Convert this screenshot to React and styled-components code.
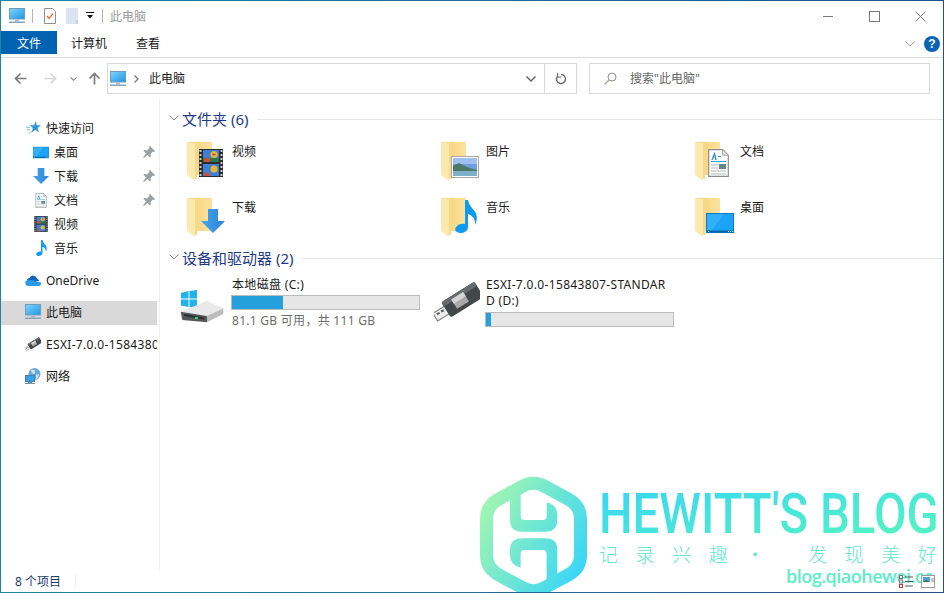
import React from 'react';
import styled, { createGlobalStyle } from 'styled-components';

const GlobalStyle = createGlobalStyle`
  html, body { margin: 0; padding: 0; background: #fff; }
  body { font-family: "Noto Sans", "Noto Sans CJK SC", sans-serif; font-size: 12px; color: #1a1a1a; }
`;

const Window = styled.div`
  position: relative;
  box-sizing: border-box;
  width: 944px;
  height: 593px;
  display: flex;
  flex-direction: column;
  overflow: hidden;
  background: #fff;
  border: 1px solid;
  border-image: linear-gradient(90deg, #1b87a6, #24508f) 1;
`;

const TitleBar = styled.div`
  height: 30px;
  display: flex;
  align-items: center;
  padding-left: 8px;
`;
const QuickItem = styled.span`
  display: flex;
  margin-left: ${p => p.$gap || 0}px;
`;
const QuickSep = styled.span`
  width: 1px;
  height: 14px;
  background: #b5b5b5;
  margin-left: ${p => p.$gap}px;
`;
const TitleText = styled.span`
  margin: 0 0 1px 7px;
  color: #9a9a9a;
`;
const WindowControls = styled.div`
  margin-left: auto;
  display: flex;
`;
const ControlButton = styled.div`
  width: 46px;
  height: 30px;
  display: flex;
  align-items: center;
  justify-content: center;
`;

const RibbonBar = styled.div`
  height: 27px;
  box-sizing: border-box;
  display: flex;
  align-items: flex-start;
  border-bottom: 1px solid #d9d9d9;
`;
const RibbonTab = styled.div`
  height: 23px;
  line-height: 25px;
  padding: 0 15px 0 14px;
  color: ${p => (p.$active ? '#fff' : '#1a1a1a')};
  background: ${p => (p.$active ? '#0063b1' : 'transparent')};
  ${p => p.$active && 'width: 56px; padding: 0; text-align: center;'}
`;
const RibbonRight = styled.div`
  margin-left: auto;
  height: 26px;
  display: flex;
  align-items: center;
  gap: 9px;
  padding-right: 3px;
`;
const HelpBadge = styled.div`
  width: 16px;
  height: 16px;
  border-radius: 50%;
  background: #0a64b8;
  color: #fff;
  font: bold 12px/16px "Liberation Sans", sans-serif;
  text-align: center;
`;

const NavBar = styled.div`
  height: 41px;
  box-sizing: border-box;
  display: flex;
  align-items: flex-start;
  padding: 5px 0 0 4px;
`;
const NavButton = styled.div`
  width: ${p => p.$w}px;
  height: 31px;
  display: flex;
  align-items: center;
  justify-content: center;
`;
const AddressBox = styled.div`
  box-sizing: border-box;
  width: 470px;
  height: 31px;
  display: flex;
  align-items: center;
  padding-left: 2px;
  border: 1px solid #d9d9d9;
`;
const Crumb = styled.span`
  margin: 0 0 2px 10px;
  color: #1a1a1a;
`;
const AddressChevron = styled.span`
  display: flex;
  margin-left: auto;
  margin-right: 8px;
`;
const RefreshSlot = styled.div`
  width: 31px;
  height: 29px;
  display: flex;
  align-items: center;
  justify-content: center;
  border-left: 1px solid #d9d9d9;
`;
const SearchBox = styled.div`
  box-sizing: border-box;
  width: 341px;
  height: 31px;
  margin-left: 12px;
  display: flex;
  align-items: center;
  gap: 13px;
  padding: 0 0 1px 14px;
  color: #666;
  border: 1px solid #d9d9d9;
`;

const Main = styled.div`
  flex: 1;
  min-height: 0;
  display: flex;
`;
const Sidebar = styled.nav`
  box-sizing: border-box;
  width: 159px;
  padding: 17px 2px 0 0;
  border-right: 1px solid #f0f0f0;
`;
const NavRow = styled.div`
  box-sizing: border-box;
  height: 24px;
  display: flex;
  align-items: center;
  padding-left: ${p => (p.$sub ? 32 : 24)}px;
  padding-bottom: ${p => (p.$lift ? 2 : 0)}px;
  margin-top: ${p => p.$top || 0}px;
  letter-spacing: ${p => (p.$spaced ? '.33px' : 'normal')};
  background: ${p => (p.$active ? '#d9d9d9' : 'transparent')};
  white-space: nowrap;
  overflow: hidden;
`;
const RowIcon = styled.span`
  display: flex;
  flex: none;
  justify-content: center;
  width: 16px;
  margin-right: 5px;
`;
const PinSlot = styled.span`
  display: flex;
  margin-left: auto;
  margin-right: 2px;
`;

const Content = styled.div`
  flex: 1;
  padding: 9px 7px 0 6px;
`;
const GroupHeader = styled.div`
  height: 20px;
  display: flex;
  align-items: center;
  color: #1e3a8a;
  font-size: 15px;
`;
const GroupChevron = styled.span`
  display: flex;
  width: 16px;
  justify-content: center;
`;
const GroupRule = styled.span`
  flex: 1;
  height: 1px;
  margin: 2px 0 0 9px;
  background: #e5e5e5;
`;
const FolderGrid = styled.div`
  display: grid;
  grid-template-columns: repeat(3, 254px);
  grid-auto-rows: 52px;
  row-gap: 4px;
  margin: 12px 0 -1px 21px;
`;
const FolderTile = styled.div`
  display: flex;
  gap: 7px;
`;
const FolderLabel = styled.span`
  line-height: 24px;
`;
const DriveRow = styled.div`
  display: flex;
  margin: 10px 0 0 14px;
`;
const DriveTile = styled.div`
  width: ${p => p.$w}px;
  display: flex;
`;
const DriveIconSlot = styled.div`
  width: 51px;
  padding-top: ${p => p.$top}px;
`;
const DriveInfo = styled.div`
  width: 189px;
`;
const DriveName = styled.div`
  line-height: 16px;
  padding-left: 1px;
  letter-spacing: .33px;
  word-break: break-all;
`;
const UsageBar = styled.div`
  box-sizing: border-box;
  height: 15px;
  margin-top: ${p => p.$top}px;
  background: #e6e6e6;
  border: 1px solid #bcbcbc;
`;
const UsageFill = styled.div`
  height: 100%;
  background: #26a0da;
`;
const DriveMeta = styled.div`
  margin-top: 3px;
  line-height: 16px;
  padding-left: 1px;
  letter-spacing: .28px;
  color: #6d6d6d;
`;

const StatusBar = styled.div`
  position: relative;
  z-index: 2;
  height: 22px;
  display: flex;
  align-items: center;
  padding-left: 14px;
  color: #1f3b6e;
`;
const StatusSep = styled.span`
  width: 1px;
  height: 14px;
  margin-left: 14px;
  background: #f0f0f0;
`;
const ViewButtons = styled.div`
  margin-left: auto;
  margin-right: 8px;
  display: flex;
  gap: 8px;
`;

const Watermark = styled.div`
  position: absolute;
  left: 479px;
  top: 475px;
  display: flex;
  gap: 11px;
  z-index: 1;
`;
const BrandColumn = styled.div`
  width: 344px;
  display: flex;
  flex-direction: column;
  padding-top: 10px;
`;
const BrandName = styled.div`
  width: 396px;
  font: 500 55px/56px Roboto, sans-serif;
  white-space: nowrap;
  transform: scaleX(.86);
  transform-origin: left center;
  background: linear-gradient(170deg, #3bd8f2 10%, #52f2c6 85%);
  -webkit-background-clip: text;
  background-clip: text;
  color: transparent;
`;
const BrandSlogan = styled.div`
  font: 300 19px/22px "Noto Sans CJK SC", sans-serif;
  letter-spacing: 17.6px;
  color: #5fe8d0;
  white-space: nowrap;
  margin-top: 1px;
`;
const SloganTail = styled.span`
  margin-left: 26px;
`;
const SloganEnd = styled.span`
  letter-spacing: 0;
`;
const BrandUrl = styled.div`
  font: 600 18px/22px "Open Sans", sans-serif;
  letter-spacing: -.5px;
  color: #5ceec8;
  margin: 0 0 0 187px;
  white-space: nowrap;
`;

const PcIcon = ({ s = 16 }) => (
  <svg width={s} height={s} viewBox="0 0 16 16">
    <defs>
      <linearGradient id="pcg" x1="0" y1="0" x2="1" y2="1">
        <stop offset="0" stopColor="#7fd6fb" />
        <stop offset="1" stopColor="#1f93e6" />
      </linearGradient>
    </defs>
    <rect x="0.5" y="0.5" width="15" height="10.5" fill="url(#pcg)" stroke="#6d9cbd" />
    <rect x="6" y="11.5" width="4" height="2" fill="#a9bccb" />
    <rect x="0" y="13.5" width="16" height="1.5" fill="#87a4bb" />
  </svg>
);

const CheckDoc = () => (
  <svg width="12" height="16" viewBox="0 0 12 16">
    <path d="M.5.5h8l3 3v12H.5z" fill="#fff" stroke="#909090" />
    <path d="M3 8l2 2.5L9 5.500" fill="none" stroke="#ea6a32" strokeWidth="1.300" />
  </svg>
);
const BlankDoc = () => (
  <svg width="12" height="16" viewBox="0 0 12 16">
    <rect width="12" height="16" fill="#dbe4f1" />
    <path d="M10 12h2v4h-2z" fill="#c7d3e4" />
  </svg>
);
const QuickDrop = () => (
  <svg width="8" height="8" viewBox="0 0 8 8">
    <path d="M0 0h8v1H0zM1 3h6L4 6.500z" fill="#111" />
  </svg>
);

const Chevron = ({ w = 10, h = 6, color = '#888', sw = 1 }) => (
  <svg width={w} height={h} viewBox="0 0 10 6">
    <path d="M.5.5L5 5 9.5.5" fill="none" stroke={color} strokeWidth={sw} />
  </svg>
);
const Arrow = ({ color, rotate = 0 }) => (
  <svg width="13" height="13" viewBox="0 0 13 13" style={{ transform: `rotate(${rotate}deg)` }}>
    <path d="M12.5 6.5H2M6.5 1.5l-5 5 5 5" fill="none" stroke={color} strokeWidth="1.7" />
  </svg>
);
const Refresh = () => (
  <svg width="12" height="12" viewBox="0 0 12 12">
    <path d="M6 1.5a4.5 4.5 0 1 1-4 2.4" fill="none" stroke="#6a6a6a" strokeWidth="1.4" />
    <path d="M2.5 0v4h3.8" fill="none" stroke="#6a6a6a" strokeWidth="1.2" />
  </svg>
);
const SearchGlass = () => (
  <svg width="13" height="13" viewBox="0 0 13 13">
    <circle cx="8" cy="5" r="4" fill="none" stroke="#8f8f8f" />
    <path d="M5 8l-4.5 4.5" stroke="#c69a78" strokeWidth="1.1" />
  </svg>
);

const StarIcon = () => (
  <svg width="15" height="14" viewBox="0 0 15 14">
    <path d="M9.5 0l1.3 4.2 4.2.1-3.4 2.6 1.3 4.4-3.6-2.6L5.6 11.5l1.3-4.4L3.5 4.3l4.7-.1z" fill="#2f93dc" />
    <path d="M0 6l4 .5M1 9l3-.8M3 12.5l2.5-2.5" stroke="#7cbcea" strokeWidth="1" />
  </svg>
);
const DesktopIcon = ({ w = 16, h = 13 }) => (
  <svg width={w} height={h} viewBox="0 0 28 20">
    <rect x="0.5" y="0.5" width="27" height="19" fill="#1ca4f8" stroke="#0d78c4" />
    <path d="M1 1h17L6 17H1z" fill="#34b0fa" />
    <rect x="1" y="17.5" width="26" height="2" fill="#0c64a8" />
    <path d="M2 18.5h1M22 18.5h1M24 18.5h1M26 18.5h1" stroke="#cfeaff" />
  </svg>
);
const DownArrowIcon = ({ w = 16, h = 16 }) => (
  <svg width={w} height={h} viewBox="0 0 24 24">
    <defs>
      <linearGradient id="dag" x1="0" y1="0" x2="1" y2="0">
        <stop offset="0" stopColor="#4aa5ea" />
        <stop offset="1" stopColor="#2a84d6" />
      </linearGradient>
    </defs>
    <path d="M7 0h10v12h7L12 24 0 12h7z" fill="url(#dag)" />
  </svg>
);
const PageIcon = ({ w = 12, h = 15 }) => (
  <svg width={w} height={h} viewBox="0 0 21 28">
    <path d="M.7.7h14l5.6 5.6v21H.7z" fill="#fff" stroke="#8c8c8c" strokeWidth="1.2" />
    <path d="M14.7.7v5.6h5.6z" fill="#e4e4e4" stroke="#a5a5a5" />
    <path d="M4 11l2.5-6L8 11" fill="none" stroke="#2f8fd8" strokeWidth="1.4" />
    <path d="M10 7.500h3M3 12.500h15" stroke="#2fa0e0" strokeWidth="1.200" />
    <path d="M3 16h7M3 19h7M3 22h15M3 25h15" stroke="#b5b5b5" />
    <rect x="11" y="15" width="7" height="5" fill="#5d8a8c" />
  </svg>
);
const FilmIcon = ({ w = 14, h = 16 }) => (
  <svg width={w} height={h} viewBox="0 0 24 28">
    <rect width="24" height="28" fill="#2b2b2b" />
    <path d="M1.500 1v26M22.500 1v26" stroke="#c9c9c9" strokeWidth="2" strokeDasharray="2 2" />
    <rect x="4" y="1" width="16" height="12" fill="#3f7fd8" />
    <rect x="4" y="15" width="16" height="12" fill="#3f7fd8" />
    <rect x="4" y="9" width="16" height="4" fill="#2c7a4a" />
    <path d="M5 10l3-2 3 2v3H5z" fill="#c94f3d" />
    <circle cx="15" cy="5.500" r="3.500" fill="#e9b82f" />
    <path d="M13.500 5.500h3" stroke="#c93a2a" strokeWidth="1.500" />
    <circle cx="15" cy="20" r="3.500" fill="#e9b82f" />
    <path d="M5 25l3-2 3 2v2H5z" fill="#c94f3d" />
  </svg>
);
const NoteIcon = ({ w = 11, h = 16 }) => (
  <svg width={w} height={h} viewBox="0 0 22 33">
    <path d="M10 0h3c1 5 4 8 6.500 11 3 4 3 9 .5 14 .5-5-1.500-9-7-11v13c0 4-4 6-8 6s-6-3-4-6 6-4 9-3z" fill="#0d9bef" />
  </svg>
);
const PinIcon = () => (
  <svg width="12" height="12" viewBox="0 0 12 12">
    <path d="M7 0l5 5-1 1-1-.5L7.500 8 8 10.500 7 11.500 4.500 9 1 12l-.8-.8L3 7.500.5 5 1.500 4l2.500.5L6.500 2 6 1z" fill="#98a0a8" />
  </svg>
);
const CloudIcon = () => (
  <svg width="16" height="11" viewBox="0 0 16 11">
    <path d="M2 6.500A3 3 0 0 1 4.500 3 4 4 0 0 1 12 3.500 3 3 0 0 1 14 6z" fill="#0f63b8" />
    <path d="M3 11a3 3 0 0 1-1-5.700l5-.3 9 2.500A3 3 0 0 1 14 11z" fill="#2a9be8" />
  </svg>
);
const UsbIcon = ({ w = 46, h = 42 }) => (
  <svg width={w} height={h} viewBox="0 0 46 42">
    <g transform="rotate(-32 23 21)">
      <rect x="-3" y="17" width="14" height="9" fill="#ececec" stroke="#7a7a7a" />
      <rect x="0" y="19" width="3" height="2" fill="#555" />
      <rect x="5" y="19" width="3" height="2" fill="#555" />
      <rect x="10" y="12" width="39" height="18" rx="2" fill="#42474a" />
      <rect x="10" y="12" width="39" height="5" rx="2" fill="#666b6e" />
      <rect x="20" y="15" width="14" height="11" fill="#a9a9a9" />
      <rect x="20" y="15" width="14" height="5" fill="#d4d4d4" />
    </g>
  </svg>
);
const NetworkIcon = () => (
  <svg width="16" height="16" viewBox="0 0 16 16">
    <circle cx="9.500" cy="6" r="6" fill="#6fa8d8" />
    <path d="M6 2c3-1 5 1 4 3S6 5 6 2zM11 7l3-1c0 3-2 5-3 5z" fill="#cfe3f2" />
    <rect x="0.500" y="7.500" width="9" height="6" fill="#35a2ea" stroke="#4d7fa6" />
    <path d="M3 14.500h4M0 15.500h10" stroke="#6c93b3" />
  </svg>
);
const HddIcon = () => (
  <svg width="44" height="36" viewBox="0 0 44 36">
    <path d="M1 3l7.500-2v7.500H1zM9.500 1L17 0v8.500H9.500zM1 9.500h7.500V17L1 15.500zM9.500 9.500H17V18l-7.500-1z" fill="#1fb2ee" />
    <path d="M.7 21.700L27 11l16.300 7.300L27 26z" fill="#e9e9e9" />
    <path d="M.7 21.700L27 26v6.300L2.300 30z" fill="#55585a" />
    <path d="M27 26l16.300-7.700V24L27 32.300z" fill="#bdbdbd" />
    <path d="M4 25l20 3.500" stroke="#2d2f30" strokeWidth="2" />
    <rect x="15" y="27" width="3" height="2" fill="#3bd65f" />
  </svg>
);
const DetailsView = () => (
  <svg width="14" height="13" viewBox="0 0 14 13">
    <rect x="0.500" y="0.500" width="3" height="3" fill="#fff" stroke="#777" />
    <rect x="0.500" y="5" width="3" height="3" fill="#fff" stroke="#777" />
    <rect x="0.500" y="9.500" width="3" height="3" fill="#fff" stroke="#c33" />
    <path d="M6 2h8M6 6.500h8M6 11h8" stroke="#555" />
  </svg>
);
const TilesView = () => (
  <svg width="14" height="13" viewBox="0 0 14 13">
    <rect x="0.500" y="0.500" width="13" height="12" fill="#fff" stroke="#9a9a9a" />
    <rect x="2" y="2" width="7" height="5" fill="#4f9fd8" />
    <path d="M2 7l3-2 4 2z" fill="#3c6b4a" />
    <path d="M10 4h3M10 6h3" stroke="#888" />
  </svg>
);

// the yellow folder; what sits in front of it comes in as children
const FolderWrap = styled.div`
  position: relative;
  width: 38px;
  height: 44px;
  flex: none;
`;
const FolderBadge = styled.span`
  position: absolute;
  display: flex;
  left: ${p => p.$x}px;
  top: ${p => p.$y}px;
`;
const FolderIcon = ({ children }) => (
  <FolderWrap>
    <svg width="26" height="42" viewBox="0 0 26 42">
      <defs>
        <linearGradient id="fback" x1="0" y1="0" x2="1" y2="0">
          <stop offset="0" stopColor="#f5cf6e" />
          <stop offset="1" stopColor="#fce3a0" />
        </linearGradient>
      </defs>
      <path d="M0 2h25v33H8z" fill="url(#fback)" />
      <path d="M0 2l8 1v38l-8-6z" fill="#fde9ae" />
      <path d="M8 3h2v36H8z" fill="#f7d98a" />
    </svg>
    {children}
  </FolderWrap>
);

const PictureThumb = () => (
  <svg width="28" height="22" viewBox="0 0 28 22">
    <rect x="0.500" y="0.500" width="27" height="21" fill="#fff" stroke="#a8a8a8" />
    <rect x="2" y="2" width="24" height="18" fill="#6f9fe0" />
    <path d="M2 2h24v6H2z" fill="#9dc0ee" />
    <path d="M2 10l6-3 8 4 10 3v6H2z" fill="#4b7a68" />
    <path d="M2 15h24v5H2z" fill="#7faec8" />
  </svg>
);

const folders = [
  { name: '视频', badge: <FolderBadge $x={12} $y={9}><FilmIcon w={24} h={28} /></FolderBadge> },
  { name: '图片', badge: <FolderBadge $x={10} $y={16}><PictureThumb /></FolderBadge> },
  { name: '文档', badge: <FolderBadge $x={13} $y={9}><PageIcon w={21} h={28} /></FolderBadge> },
  { name: '下载', badge: <FolderBadge $x={14} $y={13}><DownArrowIcon w={24} h={24} /></FolderBadge> },
  { name: '音乐', badge: <FolderBadge $x={14} $y={4}><NoteIcon w={22} h={33} /></FolderBadge> },
  { name: '桌面', badge: <FolderBadge $x={11} $y={17}><DesktopIcon w={28} h={20} /></FolderBadge> },
];

const quickLinks = [
  { name: '桌面', icon: <DesktopIcon />, pin: true },
  { name: '下载', icon: <DownArrowIcon />, pin: true },
  { name: '文档', icon: <PageIcon />, pin: true },
  { name: '视频', icon: <FilmIcon /> },
  { name: '音乐', icon: <NoteIcon /> },
];

const HewittLogo = () => (
  <svg width="108" height="124" viewBox="0 0 108 124">
    <defs>
      <linearGradient id="hexg" gradientUnits="userSpaceOnUse" x1="0" y1="25" x2="108" y2="85">
        <stop offset="0" stopColor="#a4f7ae" />
        <stop offset="1" stopColor="#3ad6f8" />
      </linearGradient>
    </defs>
    <path fill="none" stroke="url(#hexg)" strokeWidth="13" d="M42 10.500Q53.500 4 65 10.500L89 23.500Q100.500 30 100.500 43V79Q100.500 92 89 98.500L65 111.500Q53.500 118 42 111.500L18 98.500Q6.500 92 6.500 79V43Q6.500 30 18 23.500Z" />
    <path fill="url(#hexg)" d="M30 16V44Q30 55.700 41.700 55.700H65Q77.300 55.700 77.300 44V39Q77.300 29 66.700 26.300V40Q66.700 44 63 44H44Q40.700 44 40.700 40V14Z" />
    <path fill="url(#hexg)" d="M77.300 102V74Q77.300 62.300 65.600 62.300H42.300Q30 62.300 30 74V79Q30 89 40.600 91.700V78Q40.600 74 44.300 74H63.300Q66.600 74 66.600 78V104Z" />
  </svg>
);

export default function App() {
  return (
    <>
      <GlobalStyle />
      <Window>
        <TitleBar>
          <QuickItem><PcIcon /></QuickItem>
          <QuickSep $gap={7} />
          <QuickItem $gap={11}><CheckDoc /></QuickItem>
          <QuickItem $gap={10}><BlankDoc /></QuickItem>
          <QuickItem $gap={8}><QuickDrop /></QuickItem>
          <QuickSep $gap={8} />
          <TitleText>此电脑</TitleText>
          <WindowControls>
            <ControlButton>
              <svg width="10" height="1"><path d="M0 .5h10" stroke="#777" /></svg>
            </ControlButton>
            <ControlButton>
              <svg width="11" height="11"><rect x=".5" y=".5" width="10" height="10" fill="none" stroke="#777" /></svg>
            </ControlButton>
            <ControlButton>
              <svg width="11" height="11"><path d="M.5.500l10 10M10.500.500l-10 10" stroke="#777" /></svg>
            </ControlButton>
          </WindowControls>
        </TitleBar>

        <RibbonBar>
          <RibbonTab $active>文件</RibbonTab>
          <RibbonTab>计算机</RibbonTab>
          <RibbonTab>查看</RibbonTab>
          <RibbonRight>
            <Chevron color="#a5a5a5" />
            <HelpBadge>?</HelpBadge>
          </RibbonRight>
        </RibbonBar>

        <NavBar>
          <NavButton $w={30}><Arrow color="#7a7a7a" /></NavButton>
          <NavButton $w={30}><Arrow color="#d5d5d5" rotate={180} /></NavButton>
          <NavButton $w={17}><Chevron w={7} h={4} color="#8a8a8a" sw={1.6} /></NavButton>
          <NavButton $w={25}><Arrow color="#7a7a7a" rotate={90} /></NavButton>
          <AddressBox>
            <PcIcon />
            <svg width="5" height="8" viewBox="0 0 5 8" style={{ marginLeft: 8 }}>
              <path d="M.5.500L4 4 .5 7.500" fill="none" stroke="#777" strokeWidth="1.300" />
            </svg>
            <Crumb>此电脑</Crumb>
            <AddressChevron><Chevron color="#666" sw={1.500} /></AddressChevron>
            <RefreshSlot><Refresh /></RefreshSlot>
          </AddressBox>
          <SearchBox>
            <SearchGlass />
            搜索"此电脑"
          </SearchBox>
        </NavBar>

        <Main>
          <Sidebar>
            <NavRow>
              <RowIcon><StarIcon /></RowIcon>
              快速访问
            </NavRow>
            {quickLinks.map(item => (
              <NavRow $sub key={item.name}>
                <RowIcon>{item.icon}</RowIcon>
                {item.name}
                {item.pin && <PinSlot><PinIcon /></PinSlot>}
              </NavRow>
            ))}
            <NavRow $top={9} $lift><RowIcon><CloudIcon /></RowIcon>OneDrive</NavRow>
            <NavRow $top={8} $lift $active><RowIcon><PcIcon /></RowIcon>此电脑</NavRow>
            <NavRow $top={8} $lift $spaced><RowIcon><UsbIcon w={16} h={15} /></RowIcon>ESXI-7.0.0-15843807-STANDARD (D:)</NavRow>
            <NavRow $top={8} $lift><RowIcon><NetworkIcon /></RowIcon>网络</NavRow>
          </Sidebar>

          <Content>
            <GroupHeader>
              <GroupChevron><Chevron color="#8a8a8a" /></GroupChevron>
              文件夹 (6)
              <GroupRule />
            </GroupHeader>
            <FolderGrid>
              {folders.map(folder => (
                <FolderTile key={folder.name}>
                  <FolderIcon>{folder.badge}</FolderIcon>
                  <FolderLabel>{folder.name}</FolderLabel>
                </FolderTile>
              ))}
            </FolderGrid>

            <GroupHeader>
              <GroupChevron><Chevron color="#8a8a8a" /></GroupChevron>
              设备和驱动器 (2)
              <GroupRule />
            </GroupHeader>
            <DriveRow>
              <DriveTile $w={254}>
                <DriveIconSlot $top={13}><HddIcon /></DriveIconSlot>
                <DriveInfo>
                  <DriveName>本地磁盘 (C:)</DriveName>
                  <UsageBar $top={2}><UsageFill style={{ width: '27.5%' }} /></UsageBar>
                  <DriveMeta>81.1 GB 可用，共 111 GB</DriveMeta>
                </DriveInfo>
              </DriveTile>
              <DriveTile $w={240}>
                <DriveIconSlot $top={5}><UsbIcon /></DriveIconSlot>
                <DriveInfo>
                  <DriveName>ESXI-7.0.0-15843807-STANDARD (D:)</DriveName>
                  <UsageBar $top={3}><UsageFill style={{ width: '2.500%' }} /></UsageBar>
                </DriveInfo>
              </DriveTile>
            </DriveRow>
          </Content>
        </Main>

        <StatusBar>
          8 个项目
          <StatusSep />
          <ViewButtons>
            <DetailsView />
            <TilesView />
          </ViewButtons>
        </StatusBar>

        <Watermark>
          <HewittLogo />
          <BrandColumn>
            <BrandName>HEWITT'S BLOG</BrandName>
            <BrandSlogan>记录兴趣·<SloganTail>发现美<SloganEnd>好</SloganEnd></SloganTail></BrandSlogan>
            <BrandUrl>blog.qiaohewei.cc</BrandUrl>
          </BrandColumn>
        </Watermark>
      </Window>
    </>
  );
}
